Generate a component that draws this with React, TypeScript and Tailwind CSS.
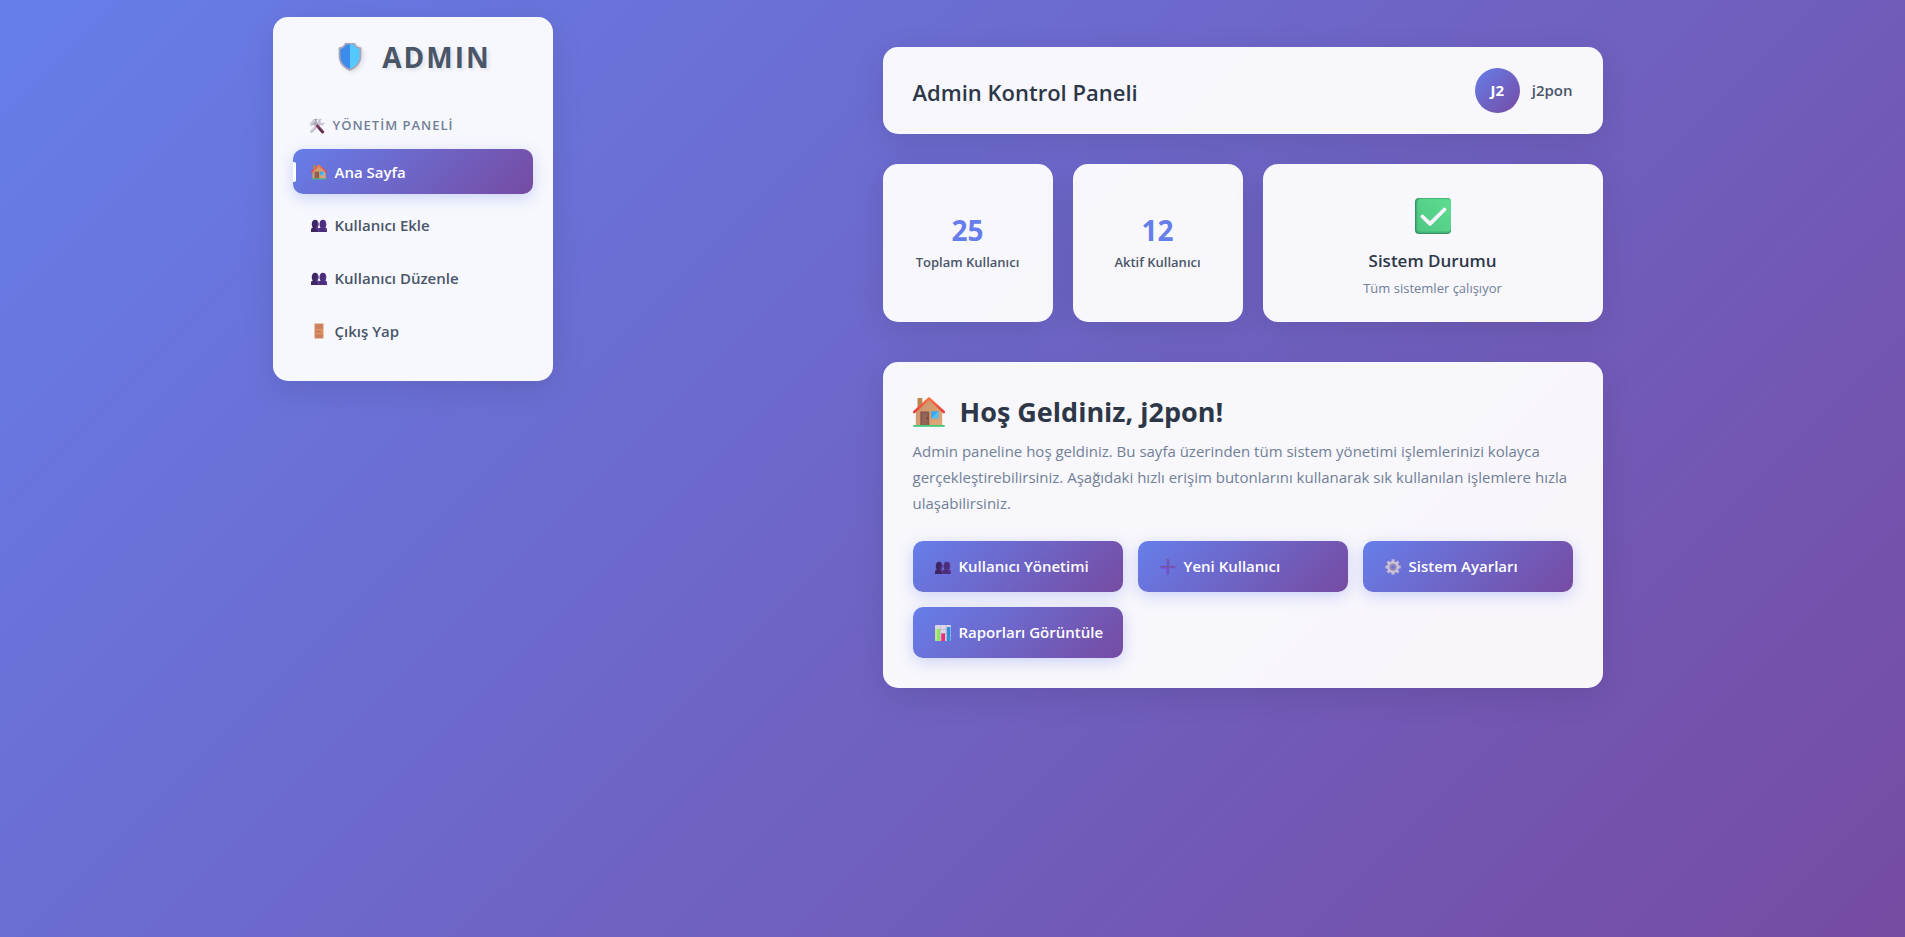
import type { ReactNode } from "react";
import { clsx } from "clsx";

type IconProps = { className?: string };

function ShieldIcon({ className }: IconProps) {
  return (
    <svg viewBox="0 0 24 28" className={className} aria-hidden="true">
      <path d="M7 0h10c.8 2.400 2.800 4 6.400 4.400V13c0 6.800-4.400 12-11.400 15C5 25 .6 19.800.6 13V4.400C4.200 4 6.200 2.400 7 0Z" fill="#a9a5b8" />
      <path d="M12 1.600H8C7 4 5.200 5.600 2.400 6.100V13c0 5.800 3.500 10.200 9.600 13.100Z" fill="#3a8bea" />
      <path d="M12 1.600h4c1 2.400 2.800 4 5.600 4.500V13c0 5.800-3.500 10.200-9.600 13.100Z" fill="#55c8ff" />
    </svg>
  );
}

function ToolsIcon({ className }: IconProps) {
  return (
    <svg viewBox="0 0 32 32" className={className} aria-hidden="true">
      <path d="M5 27 22 10" stroke="#c5c0cf" strokeWidth="6" strokeLinecap="round" />
      <path d="M3.500 26 20 10" stroke="#e0dce6" strokeWidth="2" strokeLinecap="round" />
      <path d="M18 9c-1-5 3-9 8-7l-4 5 1 3 3 1 5-3c1 5-3 8-7 7-4 0-6-2-6-6Z" fill="#c9c4d3" />
      <path d="m16 15 11.500 13" stroke="#7d3f5c" strokeWidth="6" strokeLinecap="round" />
      <path d="m20 21 7 8" stroke="#57294b" strokeWidth="3" strokeLinecap="round" />
      <path d="M1 12 9 3c3-2 6-2 9-1l-3 4 3 5-5 6-4-4-4 3Z" fill="#aca7b8" />
      <path d="m1 12 9-9 3 2-9 10Z" fill="#d7d3de" />
    </svg>
  );
}

function HouseIcon({ className }: IconProps) {
  return (
    <svg viewBox="0 0 32 32" className={className} aria-hidden="true">
      <defs>
        <linearGradient id="house-wall" x1="0" y1="0" x2="1" y2="1">
          <stop offset="0" stopColor="#c79368" />
          <stop offset="1" stopColor="#dfa878" />
        </linearGradient>
        <linearGradient id="house-roof" gradientUnits="userSpaceOnUse" x1="0" y1="1" x2="0" y2="18">
          <stop offset="0" stopColor="#ff7a3f" />
          <stop offset="1" stopColor="#e2393f" />
        </linearGradient>
      </defs>
      <path d="M4.500 2h4.800v9H4.500z" fill="#b98552" />
      <path d="M16 3.500 29.200 15v14H2.800V15Z" fill="url(#house-wall)" />
      <path d="M7.300 15.500h8.900V29H7.300z" fill="#83574f" />
      <path d="M9 17h5.500v12H9z" fill="#946459" />
      <circle cx="14.400" cy="22" r=".8" fill="#5c3838" />
      <path d="M18.300 15.300h7v7h-7z" fill="#35a6f3" />
      <path d="m18.300 22.300 7-7v7z" fill="#54bfff" />
      <path d="M1.200 16 16 2.400 30.800 16" fill="none" stroke="url(#house-roof)" strokeWidth="2.600" strokeLinecap="round" strokeLinejoin="round" />
      <path d="M.3 29h31.400v1.800H.3z" fill="#3fc878" />
    </svg>
  );
}

function UsersIcon({ className }: IconProps) {
  return (
    <svg viewBox="0 0 32 32" className={className} aria-hidden="true">
      <path d="M15 30v-4c0-3 1.800-4 4.500-4.800-1.500-1.500-2.500-3.800-2.500-6.700C17 9 19.500 5.500 23.800 5.500S30.500 9 30.500 14.500c0 2.900-1 5.200-2.500 6.700 2.500.8 4 1.800 4 4.800v4Z" fill="#4b2f7c" />
      <path d="M0 30v-4c0-3 1.500-4 4-4.800-1.500-1.500-2.500-3.800-2.500-6.700C1.500 9 4 5.500 8.200 5.500S15 9 15 14.500c0 2.900-1 5.200-2.500 6.700 2.700.8 4.500 1.800 4.500 4.800v4Z" fill="#3d2763" />
      <path d="M10 6.500c3 2 3.500 9 .5 14l-1 2c3 .5 4.500 3 4.500 7.500h3v-4c0-3-1.800-4-4.500-4.800 1.500-1.500 2.500-3.800 2.500-6.700 0-4-2-7-5-8Z" fill="#5e3b99" />
      <path d="M26 6.500c3 2 3.500 9 .5 14l-1 2c3 .5 4.500 3 4.500 7.500h2v-4c0-3-1.500-4-4-4.800 1.500-1.500 2.500-3.800 2.500-6.700 0-4-1.500-7-4.500-8Z" fill="#5e3b99" />
    </svg>
  );
}

function DoorIcon({ className }: IconProps) {
  return (
    <svg viewBox="0 0 32 32" className={className} aria-hidden="true">
      <path d="M7 1h18v30H7z" fill="#d98b5e" />
      <path d="M9 3h14v9H9zM9 15h14v5H9zM9 23h14v6H9z" fill="#c87f63" />
      <path d="M9 13h14M9 21h14" stroke="#e79a5e" strokeWidth="1.500" />
      <circle cx="22" cy="17" r="1.500" fill="#f0b85b" />
    </svg>
  );
}

function PlusIcon({ className }: IconProps) {
  return (
    <svg viewBox="0 0 32 32" className={className} aria-hidden="true">
      <path d="M13.500 1h5v12.500H31v5H18.500V31h-5V18.500H1v-5h12.500Z" fill="#7650ca" />
      <path d="M13.500 1h3v15H31M1 15h15v15" fill="none" stroke="#6d5a9a" strokeWidth="2" />
      <path d="M1 18.500h12.500V31" fill="none" stroke="#7f4fe6" strokeWidth="1.500" />
    </svg>
  );
}

function GearIcon({ className }: IconProps) {
  return (
    <svg viewBox="0 0 32 32" className={className} aria-hidden="true">
      <path d="M16 .5v6M16 25.500v6M.5 16h6M25.500 16h6M5 5l5 5M22 22l5 5M5 27l5-5M22 10l5-5" stroke="#c3b7d3" strokeWidth="6" />
      <circle cx="16" cy="16" r="8" fill="none" stroke="#cdc4d8" strokeWidth="7.500" />
      <circle cx="16" cy="16" r="5.500" fill="none" stroke="#9388ae" strokeWidth="3.500" />
    </svg>
  );
}

function ChartIcon({ className }: IconProps) {
  return (
    <svg viewBox="0 0 32 32" className={className} aria-hidden="true">
      <rect width="32" height="32" rx="1.500" fill="#ddd5e5" />
      <path d="M0 9h32M0 17h32M0 25h32M11 0v32M22 0v32" stroke="#bdb2c9" strokeWidth="1.200" />
      <path d="M1.500 8H10v24H1.500z" fill="#8fe36a" />
      <path d="M1.500 8h3v24h-3z" fill="#b6ee7c" />
      <path d="M12.500 17H20v15h-7.500z" fill="#e83070" />
      <path d="M23.500 4H31v28h-7.500z" fill="#2f8fdc" />
    </svg>
  );
}

function CheckIcon({ className }: IconProps) {
  return (
    <svg viewBox="0 0 36 36" className={className} aria-hidden="true">
      <defs>
        <linearGradient id="check-face" x1="0" y1="1" x2="1" y2="0">
          <stop offset="0" stopColor="#4fc783" />
          <stop offset="1" stopColor="#5ddd90" />
        </linearGradient>
      </defs>
      <rect width="36" height="36" rx="4" fill="#379266" />
      <rect x="1" y="0" width="35" height="35" rx="4" fill="#45b277" />
      <rect x="2.500" y="1" width="33.500" height="32.500" rx="3.500" fill="url(#check-face)" />
      <path d="M7.500 18.500 15 25.800l14.500-14.300" fill="none" stroke="#fbf3ff" strokeWidth="3.800" strokeLinecap="round" strokeLinejoin="round" />
    </svg>
  );
}

const navItems = [
  { label: "Ana Sayfa", icon: HouseIcon, active: true },
  { label: "Kullanıcı Ekle", icon: UsersIcon, active: false },
  { label: "Kullanıcı Düzenle", icon: UsersIcon, active: false },
  { label: "Çıkış Yap", icon: DoorIcon, active: false },
];

const stats = [
  { value: 25, label: "Toplam Kullanıcı" },
  { value: 12, label: "Aktif Kullanıcı" },
];

const actions = [
  { label: "Kullanıcı Yönetimi", icon: UsersIcon },
  { label: "Yeni Kullanıcı", icon: PlusIcon },
  { label: "Sistem Ayarları", icon: GearIcon },
  { label: "Raporları Görüntüle", icon: ChartIcon },
];

function Card({ className, children }: { className?: string; children: ReactNode }) {
  return (
    <div className={clsx("rounded-[15px] bg-white/95 shadow-[0_8px_32px_rgba(0,0,0,0.1)]", className)}>
      {children}
    </div>
  );
}

function Sidebar() {
  return (
    <Card className="w-[280px] shrink-0 p-5">
      <div className="flex h-10 items-center justify-center gap-5 pl-1 text-[28px] font-bold tracking-[2px] text-[#4a5568] [text-shadow:2px_2px_4px_rgba(0,0,0,0.1)]">
        <ShieldIcon className="h-7 w-6 drop-shadow-[2px_2px_2px_rgba(0,0,0,0.1)]" />
        ADMIN
      </div>
      <h2 className="mt-9 flex h-6 items-center gap-2 px-4 pt-px text-[13px] font-semibold tracking-[1px] text-[#718096]">
        <ToolsIcon className="size-4" />
        YÖNETİM PANELİ
      </h2>
      <nav className="mt-3 flex flex-col gap-2 pb-2">
        {navItems.map(({ label, icon: Icon, active }) => (
          <a
            key={label}
            href="#"
            className={clsx(
              "relative flex h-[45px] items-center gap-2 rounded-[10px] px-[18px] pt-px text-[15px] font-semibold",
              active
                ? "bg-[linear-gradient(135deg,#667eea_0%,#764ba2_100%)] text-white shadow-[0_4px_15px_rgba(102,126,234,0.3)]"
                : "text-[#4a5568]",
            )}
          >
            {active && <span className="absolute top-[13px] left-0 h-5 w-[3px] rounded-r-[2px] bg-white" />}
            <Icon className="size-4" />
            {label}
          </a>
        ))}
      </nav>
    </Card>
  );
}

export default function App() {
  return (
    <div className="min-h-screen bg-[linear-gradient(135deg,#667eea_0%,#764ba2_100%)] font-['Open_Sans',sans-serif]">
      <div className="mx-auto flex max-w-[1400px] items-start justify-between px-5 py-[17px]">
        <Sidebar />
        <main className="max-w-[780px] flex-1 p-[30px]">
          <Card className="flex items-center justify-between px-[30px] py-[21px]">
            <h1 className="pt-1 text-[22px] font-semibold text-[#2d3748]">Admin Kontrol Paneli</h1>
            <div className="flex items-center gap-3">
              <div className="flex size-[45px] items-center justify-center rounded-full bg-[linear-gradient(135deg,#667eea_0%,#764ba2_100%)] text-[15px] font-bold text-white">
                J2
              </div>
              <span className="text-[15px] font-semibold text-[#4a5568]">j2pon</span>
            </div>
          </Card>

          <section className="mt-[30px] grid grid-cols-[1fr_1fr_2fr] gap-5">
            {stats.map((stat) => (
              <Card key={stat.label} className="flex flex-col items-center justify-center pt-0.5">
                <div className="text-[28px] leading-9 font-bold text-[#667eea]">{stat.value}</div>
                <div className="text-[13px] leading-7 font-semibold text-[#4a5568]">{stat.label}</div>
              </Card>
            ))}
            <Card className="flex flex-col items-center pt-[34px] pb-[21px]">
              <CheckIcon className="size-9" />
              <h3 className="mt-[13px] text-[17px] leading-7 font-semibold text-[#2d3748]">Sistem Durumu</h3>
              <p className="text-[13px] leading-[26px] text-[#718096]">Tüm sistemler çalışıyor</p>
            </Card>
          </section>

          <Card className="mt-10 p-[30px]">
            <h2 className="flex h-10 items-center gap-[15px] text-[27px] font-bold text-[#2d3748]">
              <HouseIcon className="size-8" />
              Hoş Geldiniz, j2pon!
            </h2>
            <p className="mt-1.5 text-[15px] leading-[26px] text-[#718096]">
              Admin paneline hoş geldiniz. Bu sayfa üzerinden tüm sistem yönetimi işlemlerinizi kolayca
              gerçekleştirebilirsiniz. Aşağıdaki hızlı erişim butonlarını kullanarak sık kullanılan işlemlere hızla
              ulaşabilirsiniz.
            </p>
            <div className="mt-[25px] grid grid-cols-3 gap-[15px]">
              {actions.map(({ label, icon: Icon }) => (
                <button
                  key={label}
                  type="button"
                  className="flex h-[51px] items-center gap-2 rounded-[10px] bg-[linear-gradient(135deg,#667eea_0%,#764ba2_100%)] pl-[22px] text-[15px] font-semibold whitespace-nowrap text-white shadow-[0_4px_15px_rgba(102,126,234,0.3)]"
                >
                  <Icon className="size-4" />
                  {label}
                </button>
              ))}
            </div>
          </Card>
        </main>
      </div>
    </div>
  );
}
